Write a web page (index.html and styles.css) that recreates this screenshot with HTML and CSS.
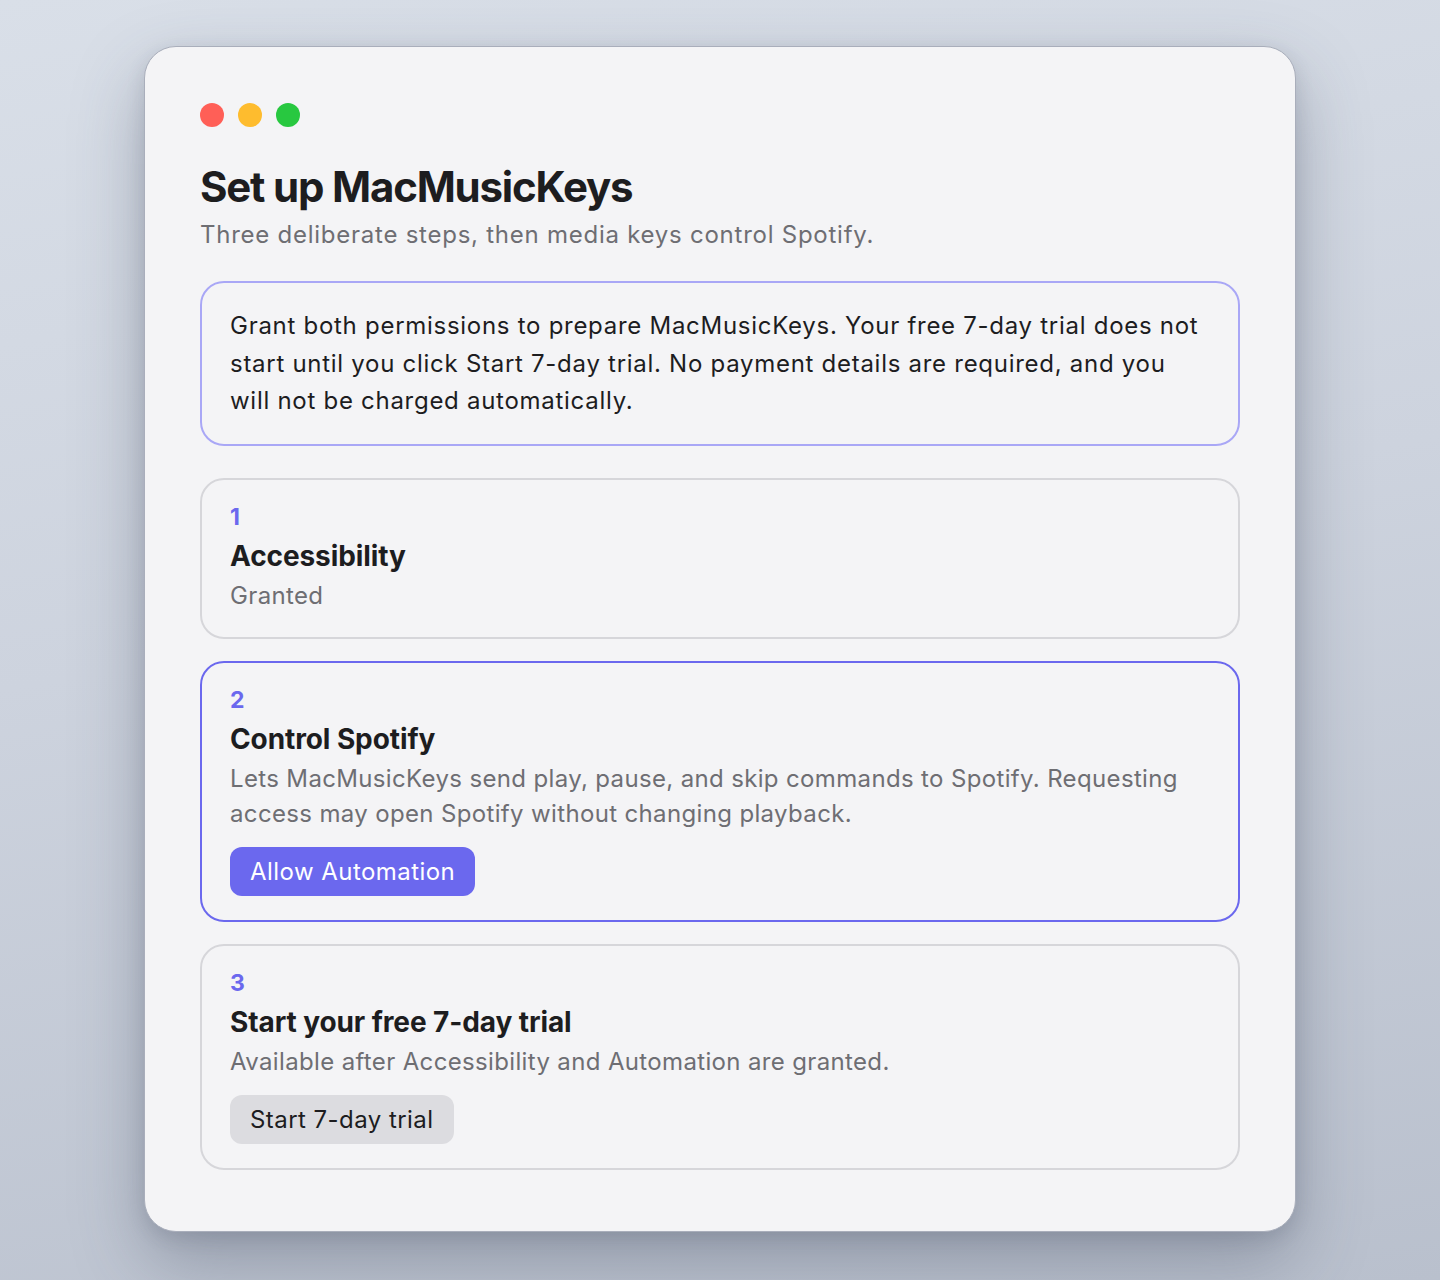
FILE: index.html
```html
<!DOCTYPE html>
<html lang="en">
<head>
<meta charset="utf-8">
<title>Set up MacMusicKeys</title>
<link rel="stylesheet" href="styles.css">
</head>
<body>
<div class="stage">
  <main class="window">
    <div class="traffic">
      <span class="dot red"></span>
      <span class="dot yellow"></span>
      <span class="dot green"></span>
    </div>
    <h1 class="title">Set up MacMusicKeys</h1>
    <p class="subtitle">Three deliberate steps, then media keys control Spotify.</p>

    <div class="notice">
      Grant both permissions to prepare MacMusicKeys. Your free 7-day trial does not start until you click Start 7-day trial. No payment details are required, and you will not be charged automatically.
    </div>

    <section class="steps">
      <div class="step">
        <div class="num">1</div>
        <div class="step-title">Accessibility</div>
        <div class="step-desc">Granted</div>
      </div>
      <div class="step active">
        <div class="num">2</div>
        <div class="step-title">Control Spotify</div>
        <div class="step-desc">Lets MacMusicKeys send play, pause, and skip commands to Spotify. Requesting access may open Spotify without changing playback.</div>
        <button class="btn primary">Allow Automation</button>
      </div>
      <div class="step">
        <div class="num">3</div>
        <div class="step-title">Start your free 7-day trial</div>
        <div class="step-desc">Available after Accessibility and Automation are granted.</div>
        <button class="btn disabled">Start 7-day trial</button>
      </div>
    </section>
  </main>
</div>
</body>
</html>
```

FILE: styles.css
```css
* { box-sizing: border-box; }
html, body { margin: 0; padding: 0; }
body {
  font-family: Inter, "Noto Sans", "Liberation Sans", sans-serif;
  background: linear-gradient(170deg, #d9dfe8 0%, #cdd3de 45%, #b9c0cd 100%);
  min-height: 1280px;
  color: #1d1d1f;
}
.stage {
  padding: 46px 144px 48px 144px;
}
.window {
  width: 1152px;
  height: 1186px;
  background: #f4f4f6;
  border: 1px solid #a9aebb;
  border-radius: 32px;
  box-shadow: 0 30px 70px rgba(60, 68, 90, 0.35), 0 6px 18px rgba(60, 68, 90, 0.15);
  padding: 56px 55px 64px 55px;
}
.traffic {
  display: flex;
  gap: 14px;
  height: 24px;
}
.dot {
  width: 24px;
  height: 24px;
  border-radius: 50%;
  display: block;
}
.red { background: #ff5f57; }
.yellow { background: #febc2e; }
.green { background: #28c840; }
.title {
  margin: 34px 0 0 0;
  font-size: 42px;
  line-height: 52px;
  font-weight: 700;
  letter-spacing: -1.2px;
  color: #1d1d1f;
}
.subtitle {
  margin: 6px 0 0 0;
  font-size: 24px;
  line-height: 32px;
  letter-spacing: 0.75px;
  color: #6e6e73;
}
.notice {
  margin-top: 30px;
  border: 2px solid #a9a7f6;
  border-radius: 24px;
  padding: 24px 28px 24px 28px;
  font-size: 24px;
  line-height: 37.5px;
  letter-spacing: 0.72px;
  color: #1d1d1f;
}
.steps {
  margin-top: 32px;
  display: flex;
  flex-direction: column;
  gap: 22px;
}
.step {
  border: 2px solid #d6d6da;
  border-radius: 24px;
  padding: 23px 28px 24px 28px;
  display: flex;
  flex-direction: column;
  align-items: flex-start;
}
.step.active { border-color: #6b68ee; }
.num {
  font-size: 23px;
  line-height: 28px;
  font-weight: 700;
  color: #6b68ee;
}
.step-title {
  margin-top: 7px;
  font-size: 28px;
  line-height: 36px;
  font-weight: 700;
  letter-spacing: -0.1px;
  color: #1d1d1f;
}
.step-desc {
  margin-top: 4px;
  font-size: 24px;
  line-height: 35px;
  letter-spacing: 0.35px;
  color: #6e6e73;
}
.btn {
  margin-top: 16px;
  height: 49px;
  padding: 0 20px;
  border: none;
  border-radius: 12px;
  font-family: inherit;
  font-size: 24px;
  line-height: 49px;
  letter-spacing: 0.45px;
}
.btn.primary { background: #6b68ee; color: #ffffff; }
.btn.disabled { background: #dcdce0; color: #1d1d1f; }
```
